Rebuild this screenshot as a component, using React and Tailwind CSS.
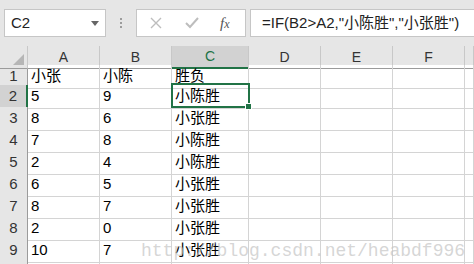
const rows = [
  ["1", "小张", "小陈", "胜负"],
  ["2", "5", "9", "小陈胜"],
  ["3", "8", "6", "小张胜"],
  ["4", "7", "8", "小陈胜"],
  ["5", "2", "4", "小陈胜"],
  ["6", "6", "5", "小张胜"],
  ["7", "8", "7", "小张胜"],
  ["8", "2", "0", "小张胜"],
  ["9", "10", "7", "小张胜"],
  ["", "", "", ""],
];

const cols = "grid grid-cols-[28px_72px_72px_77px_72px_72px_72px_1fr]";
const cell = "border-r border-b border-[#d4d4d4] flex items-center pl-[3px] whitespace-nowrap";

function Row({ r, i }) {
  const h = i === 0 ? "h-[20px]" : "h-[22px]";
  const active = i === 1;
  return (
    <div className={`${cols} ${h}`}>
      <div
        className={`border-b border-[#bdbdbd] flex items-center justify-center text-[#333] ${
          active ? "bg-[#d2d2d2] border-r-2 border-r-[#217346]" : "bg-[#e6e6e6] border-r border-r-[#9b9b9b]"
        }`}
      >
        {r[0]}
      </div>
      <div className={cell}>{r[1]}</div>
      <div className={cell}>{r[2]}</div>
      <div className={cell}>{r[3]}</div>
      <div className={cell}></div>
      <div className={cell}></div>
      <div className={cell}></div>
      <div className={cell}></div>
    </div>
  );
}

export default function App() {
  return (
    <div className="relative w-[474px] h-[264px] overflow-hidden bg-white text-[15px] text-black font-['Liberation_Sans','Noto_Sans_CJK_SC',sans-serif]">
      {/* FORMULA BAR */}
      <div className="h-[46px] bg-[#e6e6e6] flex items-start pt-[9px] pl-[4px]">
        <div className="w-[102px] h-[28px] bg-white border border-[#c6c6c6] flex items-center pl-[6px] pr-[6px] justify-between text-[#222]">
          <span>C2</span>
          <svg width="8" height="5" viewBox="0 0 8 5">
            <path d="M0 0h8L4 5z" fill="#666" />
          </svg>
        </div>
        <div className="w-[30px] h-[28px] flex flex-col items-center justify-center gap-[2px]">
          <div className="w-[2px] h-[2px] bg-[#9c9c9c]" />
          <div className="w-[2px] h-[2px] bg-[#9c9c9c]" />
          <div className="w-[2px] h-[2px] bg-[#9c9c9c]" />
        </div>
        <div className="w-[110px] h-[28px] bg-white border border-[#c6c6c6] flex items-center">
          <svg className="ml-[13px]" width="12" height="12" viewBox="0 0 12 12">
            <path d="M1 1l10 10M11 1L1 11" stroke="#bdbdbd" strokeWidth="1.4" />
          </svg>
          <svg className="ml-[23px]" width="14" height="12" viewBox="0 0 14 12">
            <path d="M1 6l4 4 8-9" stroke="#bdbdbd" strokeWidth="2" fill="none" />
          </svg>
          <span className="ml-[21px] italic text-[15px] text-[#555] font-['Liberation_Serif',serif]">
            f<span className="text-[12px]">x</span>
          </span>
        </div>
        <div className="ml-[4px] flex-1 h-[28px] bg-white border border-r-0 border-[#c6c6c6] flex items-center pl-[11px] text-[#222] whitespace-nowrap">
          =IF(B2&gt;A2,"小陈胜","小张胜")
        </div>
      </div>

      {/* COLUMN HEADERS */}
      <div className={`${cols} h-[19px] bg-[#e6e6e6] text-[14px] text-[#333]`}>
        <div className="relative border-r border-b border-[#9b9b9b] border-r-[#c8c8c8]">
          <svg className="absolute right-[3px] bottom-[3px]" width="11" height="11" viewBox="0 0 11 11">
            <path d="M11 0v11H0z" fill="#b6b6b6" />
          </svg>
        </div>
        {["A", "B", "C", "D", "E", "F", ""].map((c) => (
          <div
            key={c || "g"}
            className={`flex items-center justify-center border-r border-r-[#c8c8c8] ${
              c === "C" ? "bg-[#d2d2d2] border-b-2 border-b-[#217346] text-[#217346]" : "border-b border-b-[#9b9b9b]"
            }`}
          >
            {c}
          </div>
        ))}
      </div>

      {/* ROWS */}
      {rows.map((r, i) => (
        <Row key={i} r={r} i={i} />
      ))}

      {/* SELECTION */}
      <div className="absolute left-[171px] top-[83px] w-[79px] h-[25px] border-2 border-[#217346]" />
      <div className="absolute left-[245px] top-[103px] w-[7px] h-[7px] bg-[#217346] border border-white" />

      {/* WATERMARK */}
      <div className="absolute left-[141px] top-[238px] text-[18px] text-[#c4c4c4]/70 font-['Liberation_Mono',monospace] whitespace-nowrap pointer-events-none">
        http://blog.csdn.net/heabdf996
      </div>
    </div>
  );
}
